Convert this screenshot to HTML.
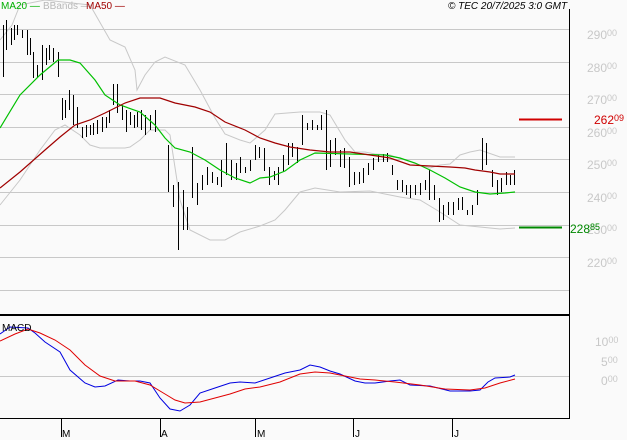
<!DOCTYPE html><html><head><style>body{margin:0;background:#fafafa}svg{display:block;font-family:"Liberation Sans",sans-serif}</style></head><body>
<svg width="627" height="440" viewBox="0 0 627 440" xmlns="http://www.w3.org/2000/svg">
<rect width="627" height="440" fill="#fafafa"/>
<g stroke="#c8c8c8" stroke-width="1">
<line x1="0" y1="29.5" x2="569" y2="29.5"/><line x1="0" y1="62.5" x2="569" y2="62.5"/><line x1="0" y1="94.5" x2="569" y2="94.5"/><line x1="0" y1="127.5" x2="569" y2="127.5"/><line x1="0" y1="159.5" x2="569" y2="159.5"/><line x1="0" y1="192.5" x2="569" y2="192.5"/><line x1="0" y1="225.5" x2="569" y2="225.5"/><line x1="0" y1="257.5" x2="569" y2="257.5"/><line x1="0" y1="290.5" x2="569" y2="290.5"/>
<line x1="0" y1="376.5" x2="569" y2="376.5"/>
</g>
<g fill="none" stroke="#c8c8c8" stroke-width="1">
<polyline points="0,40 12,25 20,5 45,0 90,5 110,40 125,47 135,70 137,90 145,75 155,62 165,57 185,65 200,90 215,118 225,134 240,140 250,143 265,130 275,114 300,112 320,112 330,115 345,140 355,152 365,152 375,154 390,155 405,160 420,165 430,168 440,165 450,164 460,155 470,152 480,150 500,157 515,157"/>
<polyline points="0,205 20,180 40,150 55,130 65,125 80,135 90,145 100,148 125,148 130,147 140,140 150,130 165,130 170,135 180,200 190,230 210,240 225,240 240,232 260,226 275,220 285,210 295,198 300,192 315,188 340,192 370,191 390,195 400,197 420,200 440,212 460,225 480,227 500,229 515,228"/>
</g>
<path fill="none" stroke="#000" stroke-width="1" shape-rendering="crispEdges" transform="translate(0.5,0)" d="M3 25V77M6 20V50M11 28V45M14 25V40M17 25V35M22 30V38M27 30V55M30 38V55M33 52V78M37 65V78M42 45V80M46 48V65M49 45V60M53 48V62M58 52V77M62 98V120M65 100V118M69 90V110M73 95V125M77 107V128M82 127V138M86 125V137M90 125V135M93 123V135M97 120V134M102 117V132M106 117V128M109 110V123M113 84V105M117 84V113M122 105V120M126 110V132M130 112V125M134 115V128M137 112V127M141 110V130M145 115V135M150 115V130M155 110V132M168 145V192M173 185V207M178 182V250M183 190V230M187 207V230M192 147V198M197 183V205M202 175V190M207 167V185M212 172V183M217 177V185M221 160V187M226 143V175M231 160V180M236 163V180M240 157V173M245 167V173M250 160V171M255 145V160M259 147V158M264 148V171M269 167V185M274 171V180M278 167V185M283 155V172M288 143V165M292 143V157M297 147V163M302 115V145M307 123V130M312 120V130M317 125V130M321 115V130M326 110V170M330 140V167M335 138V155M340 150V167M344 148V168M349 157V187M354 172V185M359 172V184M363 168V183M368 163V175M373 158V170M378 155V162M383 154V162M387 153V162M392 165V175M397 180V190M402 180V192M406 185V195M410 185V198M415 185V195M420 183V195M425 180V190M429 170V200M434 185V200M439 198V222M443 205V220M448 202V215M453 202V215M458 198V210M462 197V210M467 210V215M472 205V215M477 190V205M482 138V170M486 143V165M492 170V187M497 180V195M501 178V192M506 172V185M510 175V185M514 170V185"/>
<polyline fill="none" stroke="#00c000" stroke-width="1.2" points="0,128 20,95 40,75 58,60 70,60 80,63 95,80 105,95 120,105 140,112 155,125 165,138 175,148 190,152 205,160 220,170 235,178 250,183 260,178 270,177 285,171 300,160 315,153 385,155 400,158 415,163 430,170 445,178 460,187 475,192 490,194 505,193 515,192"/>
<polyline fill="none" stroke="#a00000" stroke-width="1.2" points="0,188 20,172 45,150 60,137 75,125 90,120 105,113 125,103 140,98 160,98 175,103 195,107 210,112 225,122 245,130 260,138 275,143 290,147 310,150 330,152 350,152 370,155 390,158 410,165 430,166 450,167 465,168 475,170 490,172 500,174 515,174"/>
<line x1="519" y1="119.5" x2="562" y2="119.5" stroke="#d00000" stroke-width="2"/>
<line x1="519" y1="227.5" x2="562" y2="227.5" stroke="#008800" stroke-width="2"/>
<line x1="0" y1="315" x2="569" y2="315" stroke="#000" stroke-width="2"/>
<line x1="569.5" y1="9" x2="569.5" y2="419" stroke="#000"/>
<line x1="0" y1="418.5" x2="570" y2="418.5" stroke="#000"/>
<g stroke="#000"><line x1="61.5" y1="419" x2="61.5" y2="437"/><line x1="160.5" y1="419" x2="160.5" y2="437"/><line x1="255.5" y1="419" x2="255.5" y2="437"/><line x1="353.5" y1="419" x2="353.5" y2="437"/><line x1="452.5" y1="419" x2="452.5" y2="437"/></g>
<g font-size="10" fill="#000"><text x="62" y="437">M</text><text x="161" y="437">A</text><text x="257" y="437">M</text><text x="355" y="437">J</text><text x="454" y="437">J</text></g>
<polyline fill="none" stroke="#0000e0" stroke-width="1" points="0,334 10,327 28,328 35,333 45,342 60,352 70,370 85,383 95,387 105,386 118,380 130,381 140,381 150,383 160,398 170,409 180,411 190,405 200,393 215,388 230,383 240,382 255,383 270,378 285,373 300,370 310,365 320,367 330,371 340,374 355,381 365,383 375,383 390,381 400,380 410,385 430,386 450,391 470,391 480,390 488,382 495,378 510,377 515,375"/>
<polyline fill="none" stroke="#e00000" stroke-width="1" points="0,341 15,334 28,329 40,333 55,340 70,350 85,365 100,376 115,381 135,381 150,385 165,394 175,400 185,403 200,402 215,398 230,394 245,389 260,387 280,382 300,374 315,372 330,373 345,376 360,379 375,380 395,382 420,385 445,389 470,390 485,388 500,383 515,379"/>
<text x="2" y="331" font-size="10" fill="#000">MACD</text>
<g font-size="10"><text x="1" y="9" fill="#00b000">MA20 —</text><text x="43" y="9" fill="#b8b8b8">BBands —</text><text x="86" y="9" fill="#a00000">MA50 —</text>
<text x="448" y="9" fill="#000" font-style="italic">© TEC 20/7/2025 3:0 GMT</text></g>
<g font-size="12" fill="#c8c8c8">
<text x="587" y="39">290<tspan font-size="9" dy="-3">00</tspan></text>
<text x="587" y="72">280<tspan font-size="9" dy="-3">00</tspan></text>
<text x="587" y="104">270<tspan font-size="9" dy="-3">00</tspan></text>
<text x="587" y="137">260<tspan font-size="9" dy="-3">00</tspan></text>
<text x="587" y="169">250<tspan font-size="9" dy="-3">00</tspan></text>
<text x="587" y="202">240<tspan font-size="9" dy="-3">00</tspan></text>
<text x="587" y="234">230<tspan font-size="9" dy="-3">00</tspan></text>
<text x="587" y="267">220<tspan font-size="9" dy="-3">00</tspan></text>
<text x="595" y="346">10<tspan font-size="9" dy="-3">00</tspan></text>
<text x="601" y="366">5<tspan font-size="9" dy="-3">00</tspan></text>
<text x="601" y="385">0<tspan font-size="9" dy="-3">00</tspan></text>
</g>
<rect x="592" y="113" width="34" height="12" fill="#fafafa"/>
<text x="594" y="124" font-size="12" fill="#d00000">262<tspan font-size="9" dy="-3">09</tspan></text>
<text x="570" y="233" font-size="12" fill="#008800">228<tspan font-size="9" dy="-3">85</tspan></text>
</svg>
</body></html>
